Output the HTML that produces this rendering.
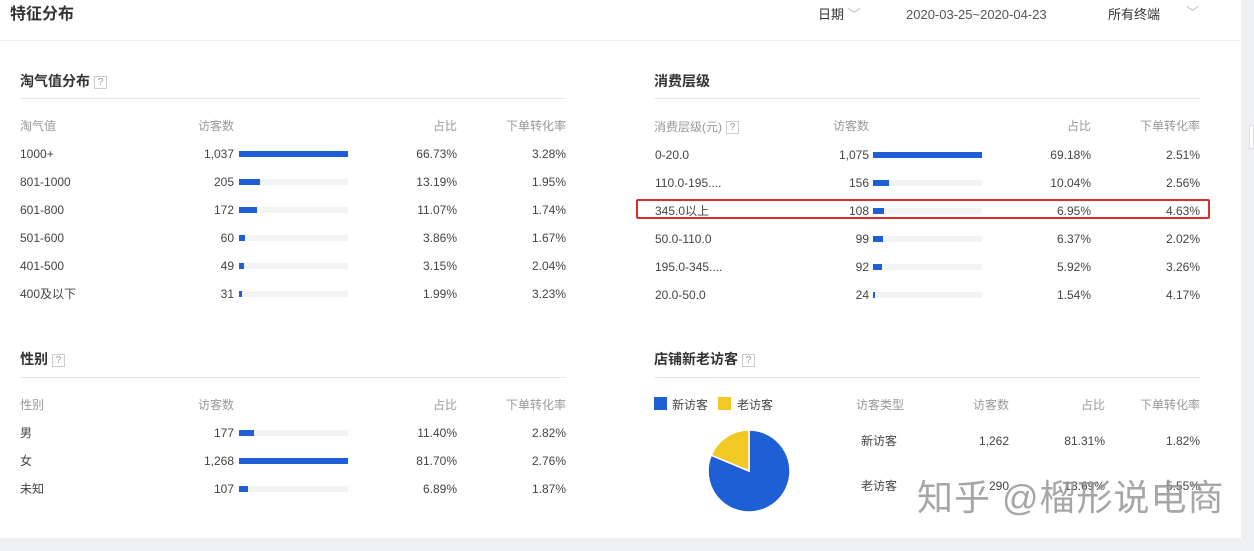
<!DOCTYPE html>
<html><head><meta charset="utf-8"><style>
*{margin:0;padding:0;box-sizing:border-box}
body{width:1254px;height:551px;background:#eef0f4;font-family:"Liberation Sans","Noto Sans CJK SC",sans-serif;position:relative;overflow:hidden;color:#444}
.card{position:absolute;left:0;top:0;width:1241px;height:538px;background:#fff}
.a{position:absolute;white-space:nowrap;font-size:12px;line-height:14px}
.r{text-align:right}
.h{color:#999}
.t{font-size:14px;font-weight:bold;color:#333;line-height:16px}
.q{display:inline-block;width:13px;height:13px;border:1px solid #ccc;color:#999;font-size:10px;line-height:11px;text-align:center;font-weight:normal;vertical-align:1px;margin-left:4px}
.ln{position:absolute;height:1px;background:#e8e8e8}
.tr{position:absolute;height:6px;width:109px;background:#f2f3f5}
.tr i{position:absolute;left:0;top:0;height:6px;background:#1f5fd6}
</style></head><body>
<div class="card"></div>
<div class="a" style="left:10px;top:6px;font-size:16px;line-height:18px;color:#333;font-weight:bold">特征分布</div>
<div class="a" style="left:818px;top:8px;font-size:13px;color:#333">日期 <span style="color:#bbb">﹀</span></div>
<div class="a" style="left:906px;top:8px;font-size:13px;color:#555">2020-03-25~2020-04-23</div>
<div class="a" style="left:1108px;top:8px;font-size:13px;color:#333">所有终端</div>
<div class="a" style="left:1186px;top:6px;font-size:13px;color:#bbb">﹀</div>
<div class="ln" style="left:0;top:40px;width:1241px;background:#eee"></div>
<div style="position:absolute;left:1249px;top:125px;width:5px;height:24px;background:#fff;border:1px solid #ddd"></div>

<div class="a t" style="left:20px;top:73px">淘气值分布<span class="q">?</span></div>
<div class="ln" style="left:20px;top:98px;width:546px"></div>
<div class="a h" style="left:20px;top:119px">淘气值</div>
<div class="a h" style="left:198px;top:119px">访客数</div>
<div class="a h r" style="left:400px;top:119px;width:57px">占比</div>
<div class="a h r" style="left:480px;top:119px;width:86px">下单转化率</div>

<div class="a" style="left:20px;top:147px">1000+</div><div class="a r" style="left:150px;top:147px;width:84px">1,037</div><div class="tr" style="left:239px;top:151px"><i style="width:109px"></i></div><div class="a r" style="left:380px;top:147px;width:77px">66.73%</div><div class="a r" style="left:480px;top:147px;width:86px">3.28%</div>
<div class="a" style="left:20px;top:175px">801-1000</div><div class="a r" style="left:150px;top:175px;width:84px">205</div><div class="tr" style="left:239px;top:179px"><i style="width:21px"></i></div><div class="a r" style="left:380px;top:175px;width:77px">13.19%</div><div class="a r" style="left:480px;top:175px;width:86px">1.95%</div>
<div class="a" style="left:20px;top:203px">601-800</div><div class="a r" style="left:150px;top:203px;width:84px">172</div><div class="tr" style="left:239px;top:207px"><i style="width:18px"></i></div><div class="a r" style="left:380px;top:203px;width:77px">11.07%</div><div class="a r" style="left:480px;top:203px;width:86px">1.74%</div>
<div class="a" style="left:20px;top:231px">501-600</div><div class="a r" style="left:150px;top:231px;width:84px">60</div><div class="tr" style="left:239px;top:235px"><i style="width:6px"></i></div><div class="a r" style="left:380px;top:231px;width:77px">3.86%</div><div class="a r" style="left:480px;top:231px;width:86px">1.67%</div>
<div class="a" style="left:20px;top:259px">401-500</div><div class="a r" style="left:150px;top:259px;width:84px">49</div><div class="tr" style="left:239px;top:263px"><i style="width:5px"></i></div><div class="a r" style="left:380px;top:259px;width:77px">3.15%</div><div class="a r" style="left:480px;top:259px;width:86px">2.04%</div>
<div class="a" style="left:20px;top:287px">400及以下</div><div class="a r" style="left:150px;top:287px;width:84px">31</div><div class="tr" style="left:239px;top:291px"><i style="width:3px"></i></div><div class="a r" style="left:380px;top:287px;width:77px">1.99%</div><div class="a r" style="left:480px;top:287px;width:86px">3.23%</div>

<div class="a t" style="left:654px;top:73px">消费层级</div>
<div class="ln" style="left:654px;top:98px;width:546px"></div>
<div class="a h" style="left:654px;top:120px">消费层级(元)<span class="q" style="color:#999">?</span></div>
<div class="a h" style="left:833px;top:119px">访客数</div>
<div class="a h r" style="left:1030px;top:119px;width:61px">占比</div>
<div class="a h r" style="left:1110px;top:119px;width:90px">下单转化率</div>

<div class="a" style="left:655px;top:148px">0-20.0</div><div class="a r" style="left:780px;top:148px;width:89px">1,075</div><div class="tr" style="left:873px;top:152px"><i style="width:109px"></i></div><div class="a r" style="left:1010px;top:148px;width:81px">69.18%</div><div class="a r" style="left:1110px;top:148px;width:90px">2.51%</div>
<div class="a" style="left:655px;top:176px">110.0-195....</div><div class="a r" style="left:780px;top:176px;width:89px">156</div><div class="tr" style="left:873px;top:180px"><i style="width:16px"></i></div><div class="a r" style="left:1010px;top:176px;width:81px">10.04%</div><div class="a r" style="left:1110px;top:176px;width:90px">2.56%</div>
<div class="a" style="left:655px;top:204px">345.0以上</div><div class="a r" style="left:780px;top:204px;width:89px">108</div><div class="tr" style="left:873px;top:208px"><i style="width:11px"></i></div><div class="a r" style="left:1010px;top:204px;width:81px">6.95%</div><div class="a r" style="left:1110px;top:204px;width:90px">4.63%</div>
<div style="position:absolute;left:636px;top:199px;width:574px;height:20px;border:2px solid #d9302c;border-radius:2px"></div>
<div class="a" style="left:655px;top:232px">50.0-110.0</div><div class="a r" style="left:780px;top:232px;width:89px">99</div><div class="tr" style="left:873px;top:236px"><i style="width:10px"></i></div><div class="a r" style="left:1010px;top:232px;width:81px">6.37%</div><div class="a r" style="left:1110px;top:232px;width:90px">2.02%</div>
<div class="a" style="left:655px;top:260px">195.0-345....</div><div class="a r" style="left:780px;top:260px;width:89px">92</div><div class="tr" style="left:873px;top:264px"><i style="width:9px"></i></div><div class="a r" style="left:1010px;top:260px;width:81px">5.92%</div><div class="a r" style="left:1110px;top:260px;width:90px">3.26%</div>
<div class="a" style="left:655px;top:288px">20.0-50.0</div><div class="a r" style="left:780px;top:288px;width:89px">24</div><div class="tr" style="left:873px;top:292px"><i style="width:2px"></i></div><div class="a r" style="left:1010px;top:288px;width:81px">1.54%</div><div class="a r" style="left:1110px;top:288px;width:90px">4.17%</div>

<div class="a t" style="left:20px;top:351px">性别<span class="q">?</span></div>
<div class="ln" style="left:20px;top:377px;width:546px"></div>
<div class="a h" style="left:20px;top:398px">性别</div>
<div class="a h" style="left:198px;top:398px">访客数</div>
<div class="a h r" style="left:400px;top:398px;width:57px">占比</div>
<div class="a h r" style="left:480px;top:398px;width:86px">下单转化率</div>
<div class="a" style="left:20px;top:426px">男</div><div class="a r" style="left:150px;top:426px;width:84px">177</div><div class="tr" style="left:239px;top:430px"><i style="width:15px"></i></div><div class="a r" style="left:380px;top:426px;width:77px">11.40%</div><div class="a r" style="left:480px;top:426px;width:86px">2.82%</div>
<div class="a" style="left:20px;top:454px">女</div><div class="a r" style="left:150px;top:454px;width:84px">1,268</div><div class="tr" style="left:239px;top:458px"><i style="width:109px"></i></div><div class="a r" style="left:380px;top:454px;width:77px">81.70%</div><div class="a r" style="left:480px;top:454px;width:86px">2.76%</div>
<div class="a" style="left:20px;top:482px">未知</div><div class="a r" style="left:150px;top:482px;width:84px">107</div><div class="tr" style="left:239px;top:486px"><i style="width:9px"></i></div><div class="a r" style="left:380px;top:482px;width:77px">6.89%</div><div class="a r" style="left:480px;top:482px;width:86px">1.87%</div>

<div class="a t" style="left:654px;top:351px">店铺新老访客<span class="q">?</span></div>
<div class="ln" style="left:654px;top:377px;width:546px"></div>
<div style="position:absolute;left:654px;top:397px;width:13px;height:13px;background:#1f5fd6"></div>
<div class="a" style="left:672px;top:398px">新访客</div>
<div style="position:absolute;left:718px;top:397px;width:13px;height:13px;background:#f2c824"></div>
<div class="a" style="left:737px;top:398px">老访客</div>
<svg style="position:absolute;left:700px;top:422px" width="100" height="100">
<path d="M49 49 L49 8 A41 41 0 1 1 11.2 33.2 Z" fill="#1f5fd6" stroke="#fff" stroke-width="1.5"/>
<path d="M49 49 L11.2 33.2 A41 41 0 0 1 49 8 Z" fill="#f2c824" stroke="#fff" stroke-width="1.5"/>
</svg>
<div class="a h" style="left:856px;top:398px">访客类型</div>
<div class="a h r" style="left:950px;top:398px;width:59px">访客数</div>
<div class="a h r" style="left:1050px;top:398px;width:55px">占比</div>
<div class="a h r" style="left:1110px;top:398px;width:90px">下单转化率</div>
<div class="a" style="left:861px;top:434px">新访客</div><div class="a r" style="left:950px;top:434px;width:59px">1,262</div><div class="a r" style="left:1030px;top:434px;width:75px">81.31%</div><div class="a r" style="left:1110px;top:434px;width:90px">1.82%</div>
<div class="a" style="left:861px;top:479px">老访客</div><div class="a r" style="left:950px;top:479px;width:59px">290</div><div class="a r" style="left:1030px;top:479px;width:75px">13.69%</div><div class="a r" style="left:1110px;top:479px;width:90px">5.55%</div>
<div class="a" style="left:917px;top:478px;font-size:36px;line-height:40px;color:rgba(150,150,150,0.85);letter-spacing:1px">知乎 @榴形说电商</div>
</body></html>
